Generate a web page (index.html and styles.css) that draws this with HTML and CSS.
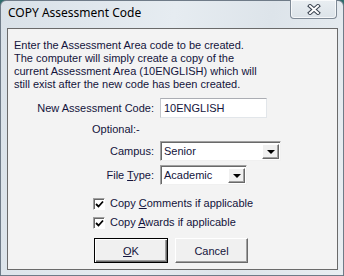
FILE: index.html
```html
<!DOCTYPE html>
<html>

<head>
    <meta charset="UTF-8">
    <title>COPY Assessment Code</title>
    <link rel="stylesheet" href="styles.css">
</head>

<body>

    <!-- =========== Dialog window =========== -->
    <div class="window">
        <div class="titlebar">
            <span class="title">COPY Assessment Code</span>
            <div class="close">
                <svg width="14" height="11" viewBox="0 0 14 11">
                    <path d="M3 2 L11 9 M11 2 L3 9" stroke="#3a4350" stroke-width="4" stroke-linecap="square" />
                    <path d="M3 2 L11 9 M11 2 L3 9" stroke="#ffffff" stroke-width="2" stroke-linecap="square" />
                </svg>
            </div>
        </div>

        <!-- =========== Client area =========== -->
        <div class="client">
            <p class="intro">Enter the Assessment Area code to be created.<br>
                The computer will simply create a copy of the<br>
                current Assessment Area (10ENGLISH) which will<br>
                still exist after the new code has been created.</p>

            <div class="form">
                <label class="lbl">New Assessment Code:</label>
                <div class="textbox">10ENGLISH</div>

                <div class="optional">Optional:-</div>
                <div></div>

                <label class="lbl">Campus:</label>
                <div class="combo wide">
                    <span class="value">Senior</span>
                    <span class="drop"><span class="arrow"></span></span>
                </div>

                <label class="lbl">File <u>T</u>ype:</label>
                <div class="combo narrow">
                    <span class="value">Academic</span>
                    <span class="drop"><span class="arrow"></span></span>
                </div>
            </div>

            <div class="checks">
                <div class="check">
                    <span class="box">
                        <svg width="9" height="9" viewBox="0 0 9 9">
                            <path d="M1 4 L3.5 6.5 L8 1.5" fill="none" stroke="#000" stroke-width="1.8" />
                        </svg>
                    </span>
                    <span>Copy <u>C</u>omments if applicable</span>
                </div>
                <div class="check">
                    <span class="box">
                        <svg width="9" height="9" viewBox="0 0 9 9">
                            <path d="M1 4 L3.5 6.5 L8 1.5" fill="none" stroke="#000" stroke-width="1.8" />
                        </svg>
                    </span>
                    <span>Copy <u>A</u>wards if applicable</span>
                </div>
            </div>

            <div class="buttons">
                <button class="btn default"><u>O</u>K</button>
                <button class="btn">Cancel</button>
            </div>
        </div>
    </div>

</body>

</html>
```

FILE: styles.css
```css
* {
    margin: 0;
    padding: 0;
    box-sizing: border-box;
}

:root {
    --frame: #dfe6ec;
    --face: #f3f3f3;
    --ink: #14143c;
}

body {
    width: 344px;
    height: 276px;
    overflow: hidden;
    background: #2f6d6d;
    font-family: "Liberation Sans", Arial, sans-serif;
    font-size: 11px;
    color: var(--ink);
}

.window {
    height: 276px;
    display: flex;
    flex-direction: column;
    border: 1px solid #6f7b88;
    border-radius: 6px 6px 0 0;
    background: linear-gradient(100deg, #d9e1e8 0%, #e6ecf1 45%, #dde4ea 70%, #e9eef2 100%);
    padding: 0 5px 5px 6px;
}

.titlebar {
    height: 27px;
    display: flex;
    justify-content: space-between;
    align-items: flex-start;
}

.title {
    font-family: "Noto Sans", "Open Sans", sans-serif;
    font-size: 12px;
    line-height: 14px;
    color: #000;
    margin-top: 5px;
    padding-left: 1px;
}

.close {
    width: 47px;
    height: 19px;
    margin-top: -1px;
    margin-right: 1px;
    border: 1px solid #7f8a96;
    border-top: none;
    border-radius: 0 0 4px 4px;
    background: linear-gradient(#e9eef2, #dce3e9);
    box-shadow: inset 0 0 0 1px rgba(255, 255, 255, 0.7);
    display: flex;
    align-items: center;
    justify-content: center;
}

.client {
    flex: 1;
    border: 1px solid #6a6a6a;
    background: var(--face);
    padding-top: 10px;
}

.intro {
    line-height: 13px;
    padding-left: 6px;
}

.form {
    margin-top: 7px;
    display: grid;
    grid-template-columns: 146px auto;
    grid-template-rows: 20px 15px 20px 20px;
    column-gap: 6px;
    row-gap: 4px;
    align-items: center;
}

.lbl {
    text-align: right;
    line-height: 13px;
}

.optional {
    text-align: left;
    padding-left: 84px;
    line-height: 13px;
}

.textbox {
    width: 107px;
    height: 20px;
    background: #fff;
    border: 1px solid #e2e6ea;
    border-top-color: #abadb3;
    border-left-color: #c4c7cc;
    padding: 3px 0 0 3px;
    line-height: 13px;
}

.combo {
    height: 20px;
    display: flex;
    align-items: stretch;
    background: #fff;
    border: 1px solid #f0f0f0;
    border-top-color: #a0a0a0;
    border-left-color: #a0a0a0;
    box-shadow: inset 1px 1px 0 #696969;
}

.combo.wide {
    width: 121px;
}

.combo.narrow {
    width: 87px;
}

.combo .value {
    flex: 1;
    padding: 3px 0 0 3px;
    line-height: 13px;
}

.combo .drop {
    width: 17px;
    margin: 2px 1px 1px 0;
    background: #f0f0f0;
    border: 1px solid #696969;
    border-top-color: #ffffff;
    border-left-color: #ffffff;
    box-shadow: inset -1px -1px 0 #a0a0a0;
    display: flex;
    align-items: center;
    justify-content: center;
}

.combo .arrow {
    width: 0;
    height: 0;
    border-left: 4px solid transparent;
    border-right: 4px solid transparent;
    border-top: 4px solid #000;
    margin-top: 1px;
}

.checks {
    margin-top: 9px;
    padding-left: 85px;
}

.check {
    height: 19px;
    display: flex;
    align-items: center;
    gap: 5px;
    line-height: 13px;
}

.check .box {
    width: 12px;
    height: 12px;
    background: #fff;
    border: 1px solid #ffffff;
    border-top-color: #a0a0a0;
    border-left-color: #a0a0a0;
    box-shadow: inset 1px 1px 0 #696969;
    display: flex;
    align-items: center;
    justify-content: center;
    padding: 1px 0 0 1px;
}

.buttons {
    margin-top: 6px;
    padding-left: 86px;
    display: flex;
    gap: 7px;
}

.btn {
    width: 73px;
    height: 25px;
    font-family: "Liberation Sans", Arial, sans-serif;
    font-size: 11px;
    color: var(--ink);
    background: #f0f0f0;
    border: 1px solid #6a6a6a;
    border-top-color: #ffffff;
    border-left-color: #ffffff;
    box-shadow: inset -1px -1px 0 #a0a0a0;
}

.btn.default {
    width: 74px;
    border: 1px solid #000;
    box-shadow: inset 1px 1px 0 #fff, inset -1px -1px 0 #6a6a6a, inset -2px -2px 0 #a0a0a0;
}
```
